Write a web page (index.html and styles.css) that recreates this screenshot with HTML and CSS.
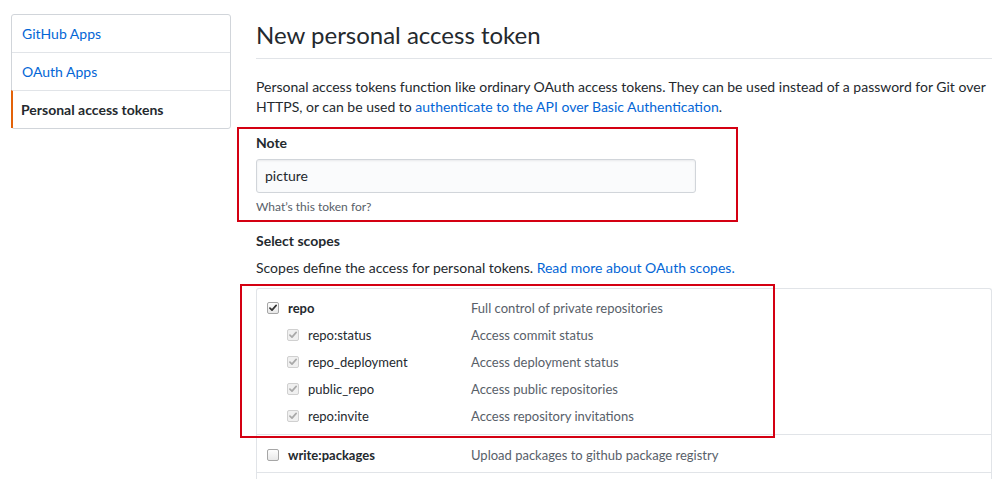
FILE: index.html
```html
<!DOCTYPE html>
<html>
<head>
<meta charset="utf-8">
<link rel="stylesheet" href="styles.css">
</head>
<body>
<div class="page">
  <nav class="side">
    <a class="side-item">GitHub Apps</a>
    <a class="side-item">OAuth Apps</a>
    <a class="side-item selected">Personal access tokens</a>
  </nav>
  <main class="main">
    <h1 class="title">New personal access token</h1>
    <p class="intro">Personal access tokens function like ordinary OAuth access tokens. They can be used instead of a password for Git over HTTPS, or can be used to <a class="link">authenticate to the API over Basic Authentication</a>.</p>
    <div class="note-group">
      <span class="mark mark-note"></span>
      <label class="label">Note</label>
      <div class="input">picture</div>
      <p class="hint">What’s this token for?</p>
    </div>
    <h3 class="label scopes-title">Select scopes</h3>
    <p class="scopes-desc">Scopes define the access for personal tokens. <a class="link">Read more about OAuth scopes.</a></p>
    <div class="scopes">
      <span class="mark mark-scopes"></span>
      <div class="group">
        <div class="row">
          <div class="name main-name"><span class="cb checked"><svg viewBox="0 0 12 12"><path d="M2.3 6.2 L4.8 8.6 L9.8 2.8" /></svg></span>repo</div>
          <div class="desc">Full control of private repositories</div>
        </div>
        <div class="row">
          <div class="name sub"><span class="cb disabled"><svg viewBox="0 0 12 12"><path d="M2.3 6.2 L4.8 8.6 L9.8 2.8" /></svg></span>repo:status</div>
          <div class="desc">Access commit status</div>
        </div>
        <div class="row">
          <div class="name sub"><span class="cb disabled"><svg viewBox="0 0 12 12"><path d="M2.3 6.2 L4.8 8.6 L9.8 2.8" /></svg></span>repo_deployment</div>
          <div class="desc">Access deployment status</div>
        </div>
        <div class="row">
          <div class="name sub"><span class="cb disabled"><svg viewBox="0 0 12 12"><path d="M2.3 6.2 L4.8 8.6 L9.8 2.8" /></svg></span>public_repo</div>
          <div class="desc">Access public repositories</div>
        </div>
        <div class="row">
          <div class="name sub"><span class="cb disabled"><svg viewBox="0 0 12 12"><path d="M2.3 6.2 L4.8 8.6 L9.8 2.8" /></svg></span>repo:invite</div>
          <div class="desc">Access repository invitations</div>
        </div>
      </div>
      <div class="group">
        <div class="row">
          <div class="name main-name"><span class="cb"></span>write:packages</div>
          <div class="desc">Upload packages to github package registry</div>
        </div>
      </div>
      <div class="group tail"></div>
    </div>
  </main>
</div>
</body>
</html>
```
FILE: styles.css
```css
html, body {
  margin: 0;
  padding: 0;
  background: #fff;
}
body {
  font-family: Lato, "Liberation Sans", Arial, sans-serif;
  font-size: 14px;
  color: #24292e;
  overflow: hidden;
}
.page {
  display: flex;
  align-items: flex-start;
  padding: 14px 0 0 11px;
  gap: 25px;
}
.side {
  width: 220px;
  flex: none;
  display: flex;
  flex-direction: column;
  border: 1px solid #d1d5da;
  border-radius: 3px;
  box-sizing: border-box;
}
.side-item {
  display: block;
  height: 38px;
  line-height: 37px;
  padding-left: 10px;
  color: #0366d6;
  border-top: 1px solid #e1e4e8;
  box-sizing: border-box;
}
.side-item:first-child {
  border-top: none;
  height: 37px;
}
.side-item.selected {
  color: #24292e;
  font-weight: 700;
  border-left: 2px solid #e36209;
  padding-left: 8px;
  margin-left: -1px;
}
.main {
  width: 736px;
  flex: none;
  position: relative;
}
.title {
  margin: 6px 0 0;
  font-size: 24px;
  font-weight: 400;
  line-height: 30px;
  padding-bottom: 8px;
  border-bottom: 1px solid #e1e4e8;
}
.intro {
  margin: 18px 0 0;
  line-height: 20px;
}
.link {
  color: #0366d6;
}
.note-group {
  position: relative;
  margin-top: 16px;
}
.mark {
  position: absolute;
  border: 2px solid #d40012;
  pointer-events: none;
}
.mark-note {
  left: -19px;
  top: -6px;
  width: 497px;
  height: 91px;
}
.label {
  display: block;
  font-weight: 700;
  font-size: 14px;
  line-height: 20px;
  margin: 0;
}
.input {
  margin-top: 6px;
  width: 440px;
  height: 34px;
  box-sizing: border-box;
  border: 1px solid #d1d5da;
  border-radius: 3px;
  background: #fafbfc;
  padding-left: 8px;
  line-height: 32px;
  box-shadow: inset 0 1px 2px rgba(27,31,35,0.075);
}
.hint {
  margin: 6px 0 0;
  font-size: 12px;
  line-height: 16px;
  color: #586069;
}
.scopes-title {
  margin-top: 16px;
}
.scopes-desc {
  margin: 7px 0 0;
  line-height: 20px;
}
.scopes {
  position: relative;
  margin-top: 10px;
  border: 1px solid #e1e4e8;
  border-bottom: none;
  border-radius: 3px 3px 0 0;
  width: 736px;
  box-sizing: border-box;
  font-size: 13px;
}
.mark-scopes {
  left: -17px;
  top: -5px;
  width: 531px;
  height: 150px;
}
.group {
  padding: 5px 0 5px 10px;
  border-bottom: 1px solid #e1e4e8;
}
.group + .group {
  padding-top: 6px;
  padding-bottom: 4px;
}
.group.tail {
  height: 10px;
  padding: 0;
  border-bottom: none;
}
.row {
  display: flex;
  height: 27px;
  align-items: center;
}
.name {
  width: 204px;
  flex: none;
  display: flex;
  align-items: center;
}
.name.sub {
  padding-left: 20px;
  width: 184px;
}
.main-name {
  font-weight: 700;
}
.desc {
  color: #586069;
}
.cb {
  width: 10px;
  height: 10px;
  border: 1px solid #a6a6a6;
  border-radius: 2px;
  background: linear-gradient(#fdfdfd, #e8e8e8);
  margin-right: 9px;
  display: inline-flex;
  align-items: center;
  justify-content: center;
  flex: none;
}
.cb svg {
  width: 10px;
  height: 10px;
  fill: none;
  stroke-width: 2;
  stroke-linecap: round;
  stroke-linejoin: round;
}
.cb.checked svg {
  stroke: #333;
}
.cb.disabled {
  border-color: #d0d0d0;
  background: #f0f0f0;
}
.cb.disabled svg {
  stroke: #a9a9a9;
}
```
